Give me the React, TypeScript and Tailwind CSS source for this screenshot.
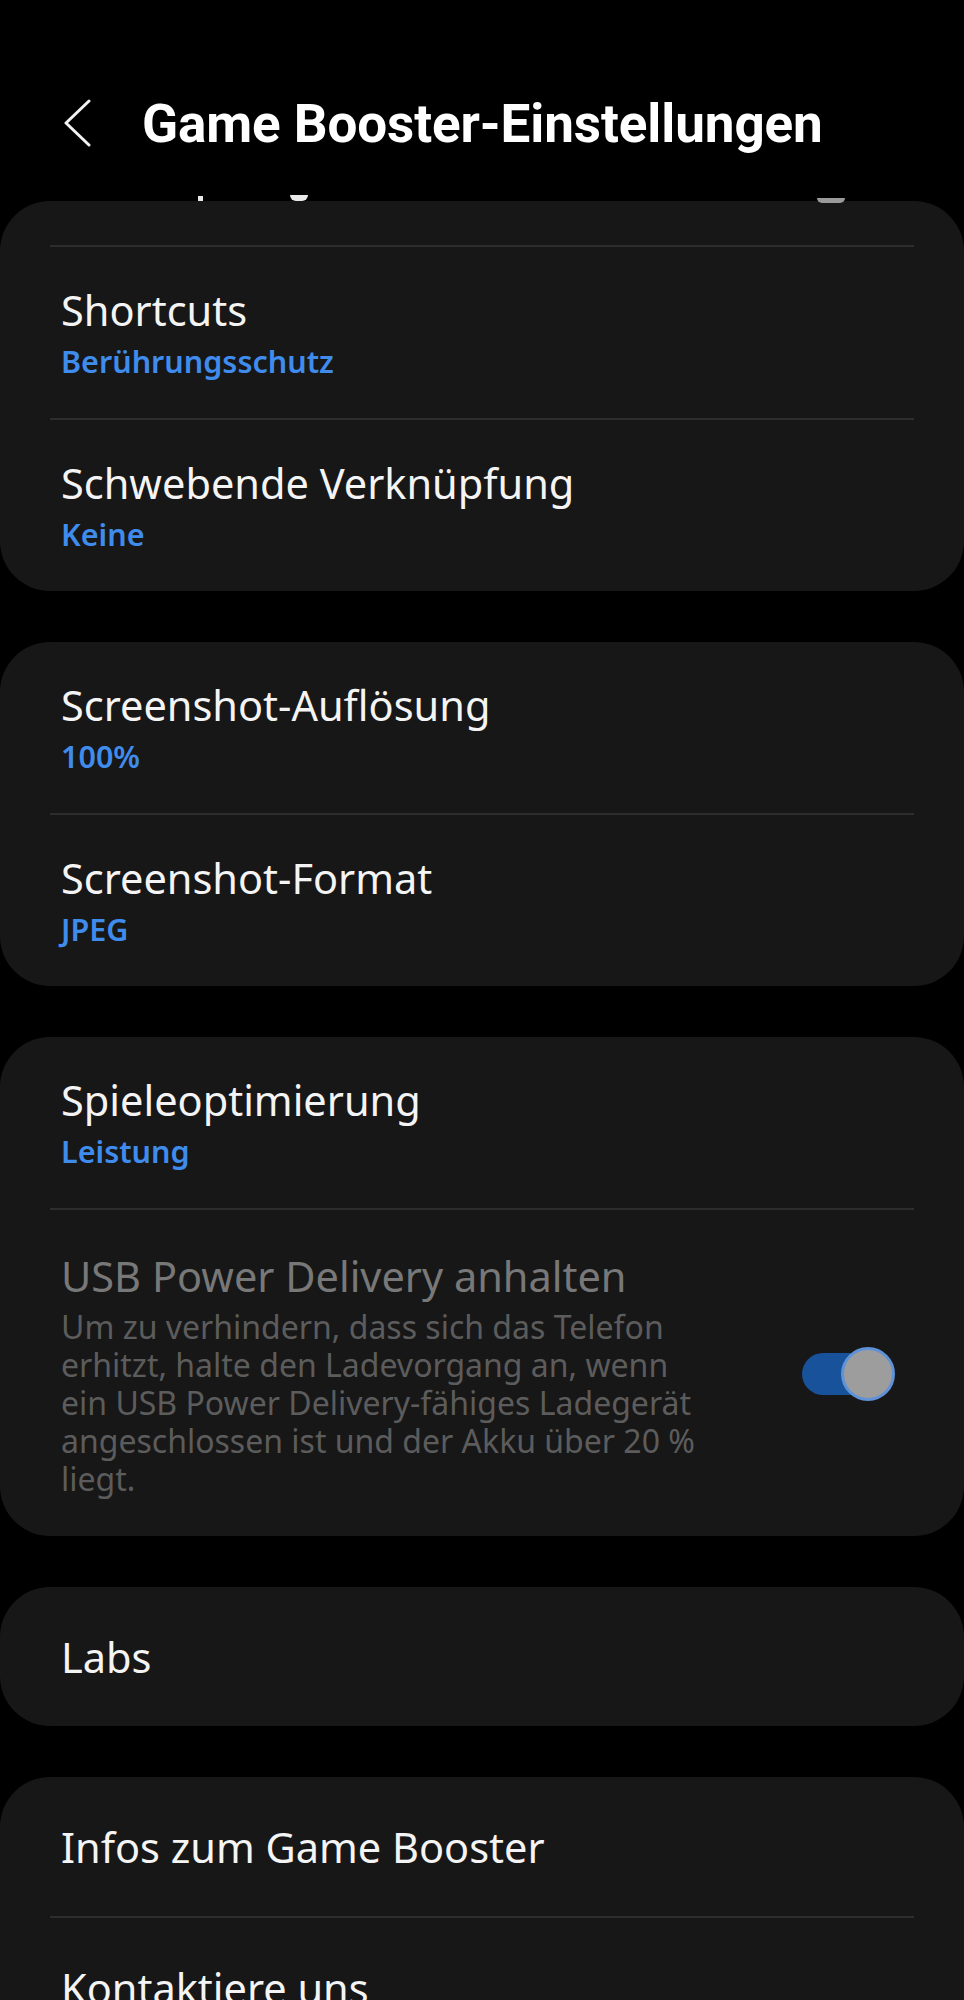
import React from "react";

type RowProps = { title: string; sub?: string };

const Divider = () => <div className="mx-[50px] h-[2px] bg-[#2d2d2d]" />;

const Row = ({ title, sub }: RowProps) => (
  <div className={sub ? "px-[61px] pt-[37px] pb-[37px]" : "px-[61px] pt-[44px] pb-[43px]"}>
    <div className="text-[41.5px] leading-[52px] text-[#f4f4f4]">{title}</div>
    {sub && (
      <div className="mt-[5px] text-[30.5px] leading-[40px] font-semibold text-[#3f8cec]">{sub}</div>
    )}
  </div>
);

const Card = ({ children }: { children: React.ReactNode }) => (
  <div className="rounded-[50px] bg-[#171717] overflow-hidden">{children}</div>
);

const App: React.FC = () => {
  return (
    <div className="w-[964px] h-[2000px] overflow-hidden bg-black font-['Noto_Sans',sans-serif]">
      {/* Kopfzeile */}
      <div className="relative h-[201px] pt-[92px] pl-[62px] flex items-start">
        <svg width="30" height="48" viewBox="0 0 30 48" className="mt-[7px]" fill="none">
          <path d="M27 2 L4 24 L27 46" stroke="#f2f2f2" strokeWidth="3" strokeLinecap="round" strokeLinejoin="round" />
        </svg>
        <h1 className="ml-[50px] font-['Roboto',sans-serif] font-bold text-[53px] tracking-[-0.1px] leading-[64px] text-white">
          Game Booster-Einstellungen
        </h1>
        {/* Reste der darueber gescrollten Zeile */}
        <span className="absolute left-[198px] top-[196px] w-[5px] h-[5px] bg-[#e8e8e8]" />
        <span className="absolute left-[290px] top-[195px] w-[18px] h-[6px] rounded-b-full bg-[#e8e8e8]" />
        <span className="absolute left-[817px] top-[198px] w-[28px] h-[5px] rounded-b-full bg-[#9a9a9a]" />
      </div>

      <div className="flex flex-col gap-[51px]">
        <Card>
          <div className="h-[44px]" />
          <Divider />
          <Row title="Shortcuts" sub="Berührungsschutz" />
          <Divider />
          <Row title="Schwebende Verknüpfung" sub="Keine" />
        </Card>

        <Card>
          <Row title="Screenshot-Auflösung" sub="100%" />
          <Divider />
          <Row title="Screenshot-Format" sub="JPEG" />
        </Card>

        <Card>
          <Row title="Spieleoptimierung" sub="Leistung" />
          <Divider />
          <div className="flex items-center pl-[61px] pr-[69px] pt-[40px] pb-[38px]">
            <div className="flex-1">
              <div className="text-[41.5px] leading-[52px] text-[#787878]">USB Power Delivery anhalten</div>
              <div className="mt-[6px] text-[32px] leading-[38px] text-[#5c5c5c]">
                <div>Um zu verhindern, dass sich das Telefon</div>
                <div>erhitzt, halte den Ladevorgang an, wenn</div>
                <div>ein USB Power Delivery-fähiges Ladegerät</div>
                <div>angeschlossen ist und der Akku über 20 %</div>
                <div>liegt.</div>
              </div>
            </div>
            <div className="relative w-[93px] h-[54px] flex items-center">
              <div className="w-[82px] h-[42px] rounded-full bg-[#17529a]" />
              <div className="absolute right-0 top-0 w-[54px] h-[54px] rounded-full bg-[#9d9d9d] border-[3px] border-[#5f92d6]" />
            </div>
          </div>
        </Card>

        <Card>
          <Row title="Labs" />
        </Card>

        <Card>
          <Row title="Infos zum Game Booster" />
          <Divider />
          <Row title="Kontaktiere uns" />
        </Card>
      </div>
    </div>
  );
};

export default App;
